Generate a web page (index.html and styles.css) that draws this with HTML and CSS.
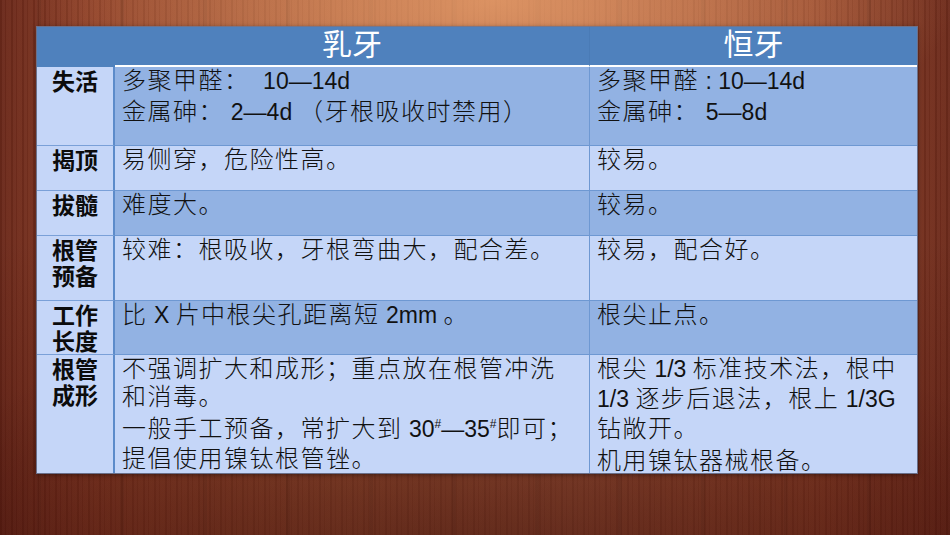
FILE: index.html
```html
<!DOCTYPE html>
<html lang="zh-CN">
<head>
<meta charset="utf-8">
<title>乳牙与恒牙根管治疗比较</title>
<link rel="stylesheet" href="styles.css">
</head>
<body>
<div class="slide">
  <div class="grid">
    <div class="hcell hblank"></div>
    <div class="hcell">乳牙</div>
    <div class="hcell hright">恒牙</div>

    <div class="label first">失活</div>
    <div class="cell dark first"><p>多聚甲醛：&nbsp; <span class="lat">10—14d</span><br>金属砷：&nbsp;<span class="lat">2—4d</span> （牙根吸收时禁用）</p></div>
    <div class="cell dark first right"><p>多聚甲醛<span class="lat"> : 10—14d</span><br>金属砷：&nbsp;<span class="lat">5—8d</span></p></div>

    <div class="label">揭顶</div>
    <div class="cell light"><p>易侧穿，危险性高。</p></div>
    <div class="cell light right"><p>较易。</p></div>

    <div class="label">拔髓</div>
    <div class="cell dark"><p>难度大。</p></div>
    <div class="cell dark right"><p>较易。</p></div>

    <div class="label">根管<br>预备</div>
    <div class="cell light"><p>较难：根吸收，牙根弯曲大，配合差。</p></div>
    <div class="cell light right"><p>较易，配合好。</p></div>

    <div class="label">工作<br>长度</div>
    <div class="cell dark"><p>比<span class="lat"> X </span>片中根尖孔距离短<span class="lat"> 2mm </span>。</p></div>
    <div class="cell dark right"><p>根尖止点。</p></div>

    <div class="label last">根管<br>成形</div>
    <div class="cell light tight"><p>不强调扩大和成形；重点放在根管冲洗<br>和消毒。</p><p class="para">一般手工预备，常扩大到<span class="lat"> 30<sup>#</sup>—35<sup>#</sup></span>即可；<br>提倡使用镍钛根管锉。</p></div>
    <div class="cell light right tight"><p>根尖<span class="lat"> 1/3 </span>标准技术法，根中<br><span class="lat">1/3 </span>逐步后退法，根上<span class="lat"> 1/3G</span><br>钻敞开。</p><p class="para">机用镍钛器械根备。</p></div>
  </div>
</div>
</body>
</html>
```

FILE: styles.css
```css
html, body {
  margin: 0;
  padding: 0;
}

body {
  width: 950px;
  height: 535px;
  overflow: hidden;
  font-family: "Noto Sans CJK SC", "Noto Sans", sans-serif;
}

.slide {
  width: 950px;
  height: 535px;
  box-sizing: border-box;
  padding: 27px 0 0 37px;
  background:
    radial-gradient(ellipse 460px 180px at 52% 0%, rgba(232, 160, 108, 0.8), rgba(232, 160, 108, 0) 100%),
    radial-gradient(ellipse 700px 300px at 50% 115%, rgba(40, 8, 4, 0.5), rgba(40, 8, 4, 0) 100%),
    repeating-linear-gradient(90deg,
      rgba(0, 0, 0, 0.06) 0px, rgba(0, 0, 0, 0.06) 2px,
      rgba(255, 255, 255, 0.03) 2px, rgba(255, 255, 255, 0.03) 5px,
      rgba(0, 0, 0, 0.04) 5px, rgba(0, 0, 0, 0.04) 6px,
      rgba(255, 220, 190, 0.04) 6px, rgba(255, 220, 190, 0.04) 11px),
    repeating-linear-gradient(90deg,
      rgba(0, 0, 0, 0) 0px, rgba(0, 0, 0, 0) 37px,
      rgba(0, 0, 0, 0.07) 37px, rgba(0, 0, 0, 0.07) 41px,
      rgba(0, 0, 0, 0) 41px, rgba(0, 0, 0, 0) 83px),
    linear-gradient(90deg, #6a281a 0%, #8a3c25 10%, #a45636 35%, #a85a3c 60%, #904229 86%, #6c2a1b 100%),
    #7a3220;
  position: relative;
}

.slide::after {
  content: "";
  position: absolute;
  inset: 0;
  background: linear-gradient(180deg, rgba(0, 0, 0, 0) 0%, rgba(0, 0, 0, 0) 45%, rgba(60, 10, 5, 0.35) 100%);
  pointer-events: none;
}

.grid {
  display: grid;
  grid-template-columns: 78px 474px 328px;
  grid-template-rows: 40px 78px 45px 45px 65px 54px 119px;
  width: 880px;
  box-shadow: 0 0 0 1px rgba(110, 120, 150, 0.9), 0 1px 5px rgba(0, 0, 0, 0.55);
  position: relative;
  z-index: 1;
}

.hcell {
  background: #4f81bd;
  color: #ffffff;
  font-size: 30px;
  line-height: 30px;
  text-align: center;
  border-bottom: 2px solid #ffffff;
  box-sizing: border-box;
}

.hblank {
  border-bottom: none;
}

.hright {
  border-left: 1px solid #4a7bb6;
}

.label {
  background: #c5d6f8;
  font-weight: 700;
  font-size: 23px;
  line-height: 26px;
  text-align: center;
  color: #0c0c0c;
  box-sizing: border-box;
  padding-top: 0;
  border-top: 1px solid #7aa0d8;
  border-right: 2px solid #5c8bca;
}

.label.first {
  border-top: none;
}

.cell {
  box-sizing: border-box;
  padding: 0 4px 0 7px;
  font-size: 24px;
  font-weight: 300;
  line-height: 28.5px;
  letter-spacing: 1.5px;
  color: #111111;
  border-top: 1px solid #6e98d2;
  white-space: nowrap;
}

.cell.tight {
  line-height: 28px;
}

.cell.first {
  border-top: none;
}

.cell.right {
  border-left: 1px solid #6e98d2;
}

.dark {
  background: #92b2e3;
}

.light {
  background: #c5d6f8;
}

.cell p {
  margin: 0;
}

.cell p:first-child {
  margin-top: -2px;
}

.cell p.para {
  margin-top: 4px;
}

.lat {
  font-family: "Liberation Sans", "Noto Sans", sans-serif;
  font-weight: 400;
  font-size: 23px;
  letter-spacing: 0;
}

sup {
  font-size: 12px;
  line-height: 0;
  vertical-align: 9px;
  letter-spacing: 0;
}
```
